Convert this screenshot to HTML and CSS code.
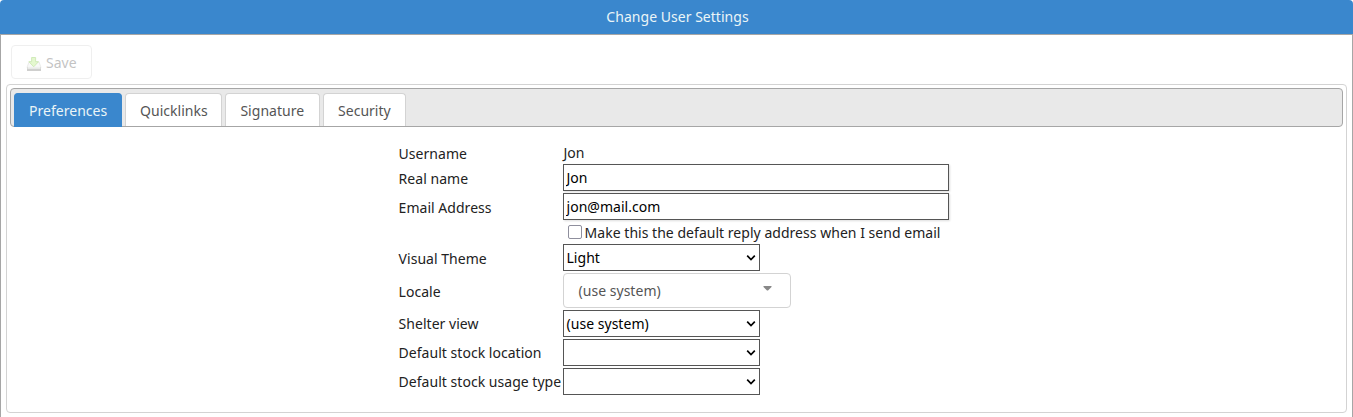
FILE: index.html
```html
<!DOCTYPE html>
<html lang="en">
<head>
<meta charset="utf-8">
<title>Change User Settings</title>
<link rel="stylesheet" href="styles.css">
</head>
<body>
<header class="page-header">Change User Settings</header>
<main class="content">
  <button class="save" type="button" disabled>
    <svg class="save-icon" width="16" height="16" viewBox="0 0 16 16">
      <path d="M3 6h10l2 5.5H1z" fill="#eeeeec" stroke="#babdb6" stroke-width=".8"/>
      <path d="M1 11h14v4H1z" fill="#777975"/>
      <path d="M1.5 10.8h13v2h-13z" fill="#d3d7cf"/>
      <path d="M5.6 1.5h4v4.2h2.9L7.7 10.8 2.9 5.7h2.7z" fill="#b4ec78" stroke="#73c22c" stroke-width=".9"/>
    </svg>
    <span>Save</span>
  </button>
  <section class="tabs">
    <nav class="tab-bar">
      <a class="tab active">Preferences</a>
      <a class="tab quicklinks">Quicklinks</a>
      <a class="tab signature">Signature</a>
      <a class="tab security">Security</a>
    </nav>
    <form class="form">
      <div class="row first"><label class="label">Username</label><span class="value">Jon</span></div>
      <div class="row"><label class="label">Real name</label><input class="field text" type="text" value="Jon"></div>
      <div class="row"><label class="label">Email Address</label><input class="field text" type="text" value="jon@mail.com"></div>
      <div class="row check-row"><span></span><label class="check"><input class="box" type="checkbox"><span class="check-text">Make this the default reply address when I send email</span></label></div>
      <div class="row"><label class="label">Visual Theme</label><div class="field select"><span>Light</span><svg class="chevron" width="10" height="8" viewBox="0 0 10 8"><path d="M1.2 1.7 5 5.5 8.8 1.7"/></svg></div></div>
      <div class="row locale-row"><label class="label">Locale</label><div class="locale"><span>(use system)</span><svg class="triangle" width="9" height="5" viewBox="0 0 9 5"><path d="M.5 0h8v1L5 4.5H4L.5 1z"/></svg></div></div>
      <div class="row"><label class="label raised">Shelter view</label><div class="field select"><span>(use system)</span><svg class="chevron" width="10" height="8" viewBox="0 0 10 8"><path d="M1.2 1.7 5 5.5 8.8 1.7"/></svg></div></div>
      <div class="row"><label class="label raised">Default stock location</label><div class="field select"><span></span><svg class="chevron" width="10" height="8" viewBox="0 0 10 8"><path d="M1.2 1.7 5 5.5 8.8 1.7"/></svg></div></div>
      <div class="row"><label class="label raised">Default stock usage type</label><div class="field select"><span></span><svg class="chevron" width="10" height="8" viewBox="0 0 10 8"><path d="M1.2 1.7 5 5.5 8.8 1.7"/></svg></div></div>
    </form>
  </section>
</main>
</body>
</html>
```
FILE: styles.css
```css
* { box-sizing: border-box; }
body {
  margin: 0;
  height: 417px;
  overflow: hidden;
  background: #fff;
  color: #222;
  font: 14px/20px "Noto Sans", sans-serif;
  letter-spacing: .03px;
}
.page-header {
  height: 34px;
  padding-left: 2px;
  border-radius: 4px 4px 0 0;
  background: #3a87cd;
  color: #eaf5f7;
  line-height: 34px;
  text-align: center;
}
.content {
  height: 383px;
  padding: 10px 5px 0;
  border: 1px solid #a6a6a6;
  border-bottom: 0;
}
.save {
  display: flex;
  align-items: center;
  gap: 4px;
  width: 81px;
  height: 34px;
  margin: 0 0 5px 5px;
  padding: 2px 14px 0;
  border: 1px solid #d3d3d3;
  border-radius: 4px;
  background: #fff;
  color: #555;
  font: inherit;
  opacity: .35;
}
.save-icon { flex: none; margin-top: 1px; }
.tabs {
  height: 329px;
  padding: 3px;
  border: 1px solid #d3d3d3;
  border-radius: 4px;
}
.tab-bar {
  display: flex;
  align-items: flex-end;
  gap: 3px;
  height: 39px;
  padding-left: 3px;
  border: 1px solid #a6a6a6;
  border-radius: 4px;
  background: #e9e9e9;
}
.tab {
  width: 108px;
  height: 33px;
  padding: 0 14px;
  border: 1px solid #d3d3d3;
  border-bottom: 0;
  border-radius: 4px 4px 0 0;
  background: #fff;
  color: #555;
  line-height: 33px;
}
.tab.active {
  height: 34px;
  margin-bottom: -1px;
  border-color: #3a87cd;
  background: #3a87cd;
  color: #eaf5f7;
}
.tab.quicklinks { width: 97.4px; }
.tab.signature { width: 94.6px; }
.tab.security { width: 83px; }
.form {
  width: 556px;
  margin: 15px 0 0 388.6px;
}
.row {
  display: grid;
  grid-template-columns: 164.4px 1fr;
  align-items: center;
  height: 29px;
}
.row.first { height: 21px; }
.label { padding-top: 2px; white-space: nowrap; }
.value { padding-left: .4px; }
.label.raised { padding-top: 0; }
.check-row { height: 22px; }
.locale-row { height: 37px; }
.field {
  height: 27px;
  border: 1px solid #555;
  background: #fff;
  color: #000;
  font: inherit;
}
.text {
  width: 386px;
  padding: 0 2.5px;
  border-radius: 0;
  letter-spacing: .03px;
  box-shadow: 1px 1px 2px #ddd;
}
.select {
  display: flex;
  align-items: center;
  justify-content: space-between;
  width: 197px;
  padding: 0 3px 0 2.5px;
}
.chevron { fill: none; stroke: #000; stroke-width: 1.7; }
.check {
  display: flex;
  align-items: center;
  gap: 2.6px;
  padding-left: 5px;
  white-space: nowrap;
}
.check-text { padding-top: 2px; }
.box {
  appearance: none;
  width: 14px;
  height: 14px;
  margin: 0;
  border: 1px solid #8f8f9d;
  border-radius: 2px;
}
.locale {
  display: flex;
  align-items: center;
  justify-content: space-between;
  width: 228px;
  height: 35px;
  padding: 0 18px 0 14.5px;
  border: 1px solid #d3d3d3;
  border-radius: 4px;
  color: #555;
}
.triangle { margin-top: -5px; fill: #888; }
```
